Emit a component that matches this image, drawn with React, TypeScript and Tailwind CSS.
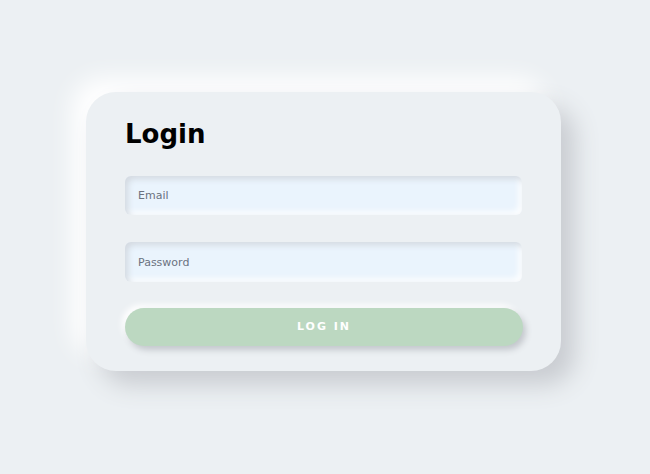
export default function App() {
  return (
    <div
      className="min-h-[474px] w-full bg-[#ecf0f3] flex justify-center pt-[92px] pr-[3px]"
      style={{ fontFamily: '"DejaVu Sans", sans-serif' }}
    >
      <div className="w-[475px] h-[279px] rounded-[30px] bg-[#ecf0f3] px-[39px] pt-[26px] shadow-[14px_14px_24px_#c9ccd1,-14px_-14px_24px_#ffffff]">
        <h1 className="text-[26px] leading-[32px] font-bold text-black mb-[26px]">Login</h1>
        <form className="flex flex-col gap-[27px]" onSubmit={(e) => e.preventDefault()}>
          <input
            type="email"
            placeholder="Email"
            className="w-[397px] h-[39px] rounded-[6px] bg-[#eaf4fd] px-[13px] text-[11px] text-gray-700 placeholder:text-[#6b7280] outline-none shadow-[inset_3px_3px_6px_#d3d9e0,inset_-3px_-3px_6px_#ffffff]"
          />
          <input
            type="password"
            placeholder="Password"
            className="w-[397px] h-[40px] rounded-[6px] bg-[#eaf4fd] px-[13px] text-[11px] text-gray-700 placeholder:text-[#6b7280] outline-none shadow-[inset_3px_3px_6px_#d3d9e0,inset_-3px_-3px_6px_#ffffff]"
          />
          <button
            type="submit"
            className="w-[398px] h-[38px] -mt-[1px] rounded-full bg-[#bcd8c1] text-white text-[11px] font-bold tracking-[2px] shadow-[3px_4px_6px_#c3c7cc,-3px_-3px_6px_#ffffff]"
          >
            LOG IN
          </button>
        </form>
      </div>
    </div>
  )
}
